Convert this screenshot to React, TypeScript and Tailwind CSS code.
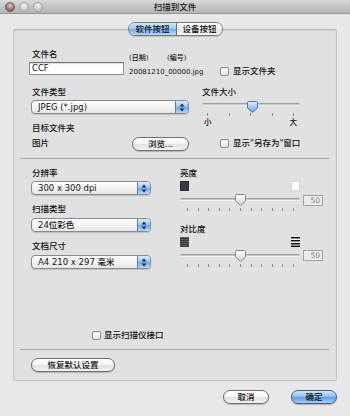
import React from "react";

function Checkbox() {
  return (
    <span className="inline-block w-[9px] h-[9px] shrink-0 border border-[#8d8d8d] rounded-[2px] bg-[linear-gradient(to_bottom,#ffffff,#e4e4e4)] shadow-[inset_0_1px_1px_rgba(0,0,0,0.08)]" />
  );
}

function Stepper() {
  return (
    <div className="w-[13px] h-full border-l border-[#5b80ad] bg-[linear-gradient(to_bottom,#dcecfc,#9cc6f1_48%,#6ea8e9_52%,#b9d9f8)] flex items-center justify-center">
      <svg width="6" height="9" viewBox="0 0 6 9">
        <path d="M3 0.5 L5.5 3.5 H0.5 Z" fill="#1d2f4c" />
        <path d="M3 8.5 L5.5 5.5 H0.5 Z" fill="#1d2f4c" />
      </svg>
    </div>
  );
}

function Popup({ className, label }: { className: string; label: string }) {
  return (
    <div
      className={
        "flex h-[14px] rounded-[4px] border border-[#8a8a8a] overflow-hidden bg-[linear-gradient(to_bottom,#ffffff,#f4f4f4_50%,#e6e6e6)] shadow-[0_1px_1px_rgba(0,0,0,0.15)] " +
        className
      }
    >
      <div className="flex-1 pl-[6px] leading-[12px] text-[8.5px] text-[#111] whitespace-nowrap">{label}</div>
      <Stepper />
    </div>
  );
}

function PushButton({ className, label }: { className: string; label: string }) {
  return (
    <div
      className={
        "h-[14px] rounded-full border border-[#6f6f6f] bg-[linear-gradient(to_bottom,#ffffff,#f6f6f6_45%,#e2e2e2_55%,#f3f3f3)] shadow-[0_1px_1px_rgba(0,0,0,0.2)] flex items-center justify-center text-[8.5px] text-[#111] leading-none " +
        className
      }
    >
      {label}
    </div>
  );
}

function BlueKnob() {
  return (
    <svg width="11" height="12" viewBox="0 0 11 12">
      <defs>
        <linearGradient id="kb" x1="0" y1="0" x2="0" y2="1">
          <stop offset="0" stopColor="#e6f2fe" />
          <stop offset="0.5" stopColor="#a3cbf3" />
          <stop offset="1" stopColor="#5f9fe6" />
        </linearGradient>
      </defs>
      <path
        d="M1.5 0.5 H9.5 A1 1 0 0 1 10.5 1.5 V7 L5.5 11.5 L0.5 7 V1.5 A1 1 0 0 1 1.5 0.5 Z"
        fill="url(#kb)"
        stroke="#4d77a6"
      />
    </svg>
  );
}

function WhiteKnob() {
  return (
    <svg width="11" height="12" viewBox="0 0 11 12">
      <defs>
        <linearGradient id="kw" x1="0" y1="0" x2="0" y2="1">
          <stop offset="0" stopColor="#ffffff" />
          <stop offset="1" stopColor="#d2d2d2" />
        </linearGradient>
      </defs>
      <path
        d="M1.5 0.5 H9.5 A1 1 0 0 1 10.5 1.5 V7 L5.5 11.5 L0.5 7 V1.5 A1 1 0 0 1 1.5 0.5 Z"
        fill="url(#kw)"
        stroke="#838383"
      />
    </svg>
  );
}

function Track() {
  return (
    <div className="h-[3px] rounded-full bg-[linear-gradient(to_bottom,#8a8a8a,#bdbdbd_60%,#d8d8d8)] border-b border-[#f0f0f0]" />
  );
}

function Ticks({ n, className }: { n: number; className: string }) {
  return (
    <div className={"flex justify-between h-[3px] " + className}>
      {Array.from({ length: n }).map((_, i) => (
        <span key={i} className="w-px h-[3px] bg-[#8a8a8a]" />
      ))}
    </div>
  );
}

function ValueBox() {
  return (
    <div className="ml-[3px] mt-px w-[20px] h-[11px] border border-[#a2a2a2] bg-[#ececec] text-right pr-[2px] text-[7.5px] leading-[9px] text-[#7c7c7c]">
      50
    </div>
  );
}

function Label({ children, className = "" }: { children: React.ReactNode; className?: string }) {
  return <div className={"h-[12px] leading-[12px] text-[8.5px] text-[#111] whitespace-nowrap " + className}>{children}</div>;
}

export default function App() {
  return (
    <div className="w-[350px] h-[416px] bg-[#e8e8e8] flex flex-col overflow-hidden font-[family-name:'DejaVu_Sans','Noto_Sans_CJK_SC',sans-serif] font-medium text-[#111]">
      {/* title bar */}
      <div className="h-[14px] grid grid-cols-[1fr_auto_1fr] items-center bg-[linear-gradient(to_bottom,#dadada,#c2c2c2_60%,#b6b6b6)] border-b border-[#959595]">
        <div className="flex items-center gap-[4px] pl-[5px]">
          <span className="w-[10px] h-[10px] rounded-full border border-[#6b5c52] bg-[radial-gradient(circle_at_50%_30%,#d8cbc0,#8e7b6e_60%,#6d5c51)]" />
          <span className="w-[10px] h-[10px] rounded-full border border-[#a3a3a3] bg-[radial-gradient(circle_at_50%_30%,#f2f2f2,#cdcdcd_60%,#bdbdbd)]" />
          <span className="w-[10px] h-[10px] rounded-full border border-[#a3a3a3] bg-[radial-gradient(circle_at_50%_30%,#f2f2f2,#cdcdcd_60%,#bdbdbd)]" />
        </div>
        <div className="text-[8.5px] leading-[12px] text-[#1a1a1a]">扫描到文件</div>
        <div />
      </div>

      {/* group box */}
      <div className="px-[13px] pt-[15px]">
        <div className="relative h-[352px] border border-[#c6c6c6] border-t-[#b5b5b5] rounded-[2px] bg-[#e1e1e1] shadow-[inset_0_1px_2px_rgba(0,0,0,0.06)] flex flex-col">
          {/* tabs */}
          <div className="absolute left-[114px] -top-[8px] flex h-[14px] w-[95px] rounded-full border border-[#777] overflow-hidden shadow-[0_1px_1px_rgba(0,0,0,0.15)] text-[8.5px] leading-[12px]">
            <div className="w-[47px] flex items-center justify-center bg-[linear-gradient(to_bottom,#d6e9fc,#9ec8f2_48%,#74adea_52%,#b8dafa)] text-[#111]">
              软件按钮
            </div>
            <div className="w-px bg-[#6d6d6d]" />
            <div className="flex-1 flex items-center justify-center bg-[linear-gradient(to_bottom,#ffffff,#f4f4f4_48%,#e4e4e4_52%,#f6f6f6)] text-[#111]">
              设备按钮
            </div>
          </div>

          {/* section 1 */}
          <div className="pl-[15px] pt-[18px]">
            <div className="flex">
              <div className="w-[95px]">
                <Label className="pl-[3px]">文件名</Label>
                <div className="mt-[2px] h-[13px] border border-[#8e8e8e] border-t-[#6f6f6f] bg-white shadow-[inset_0_1px_1px_rgba(0,0,0,0.15)] pl-[2px] text-[8.5px] leading-[11px]">
                  CCF
                </div>
              </div>
              <div className="ml-[5px] w-[86px]">
                <div className="mt-[5px] h-[10px] flex text-[7px] leading-[10px]">
                  <span className="w-[38px]">(日期)</span>
                  <span>(编号)</span>
                </div>
                <div className="mt-[4px] h-[10px] text-[7px] leading-[10px] whitespace-nowrap">20081210_00000.jpg</div>
              </div>
              <div className="ml-[5px] pt-[19px]">
                <div className="flex items-center gap-[4px] h-[9px]">
                  <Checkbox />
                  <span className="text-[8.5px] leading-[9px]">显示文件夹</span>
                </div>
              </div>
            </div>

            <div className="flex gap-[13px]">
              <div className="w-[160px]">
                <Label className="mt-[9px] pl-[3px]">文件类型</Label>
                <Popup className="mt-[2px] ml-[2px] w-[158px]" label="JPEG (*.jpg)" />
                <Label className="mt-[8px] pl-[3px]">目标文件夹</Label>
                <div className="mt-[3px] h-[14px] flex items-center">
                  <Label className="pl-[3px] -mt-[2px]">图片</Label>
                  <PushButton className="ml-auto w-[57px]" label="浏览..." />
                </div>
              </div>
              <div className="w-[98px]">
                <Label className="mt-[9px]">文件大小</Label>
                <div className="relative h-[13px] mt-[2px]">
                  <div className="pt-[3px]">
                    <Track />
                  </div>
                  <div className="absolute left-[45px] top-[1px] leading-none">
                    <BlueKnob />
                  </div>
                </div>
                <Ticks n={5} className="pl-[5px] pr-[6px]" />
                <div className="mt-[2px] h-[9px] flex justify-between pl-[2px] pr-[3px] text-[7.5px] leading-[9px]">
                  <span>小</span>
                  <span>大</span>
                </div>
              </div>
            </div>
          </div>
          <div className="-mt-[13px] pl-[206px] h-[10px] flex items-center gap-[4px]">
            <Checkbox />
            <span className="text-[8.5px] leading-[9px] whitespace-nowrap">显示"另存为"窗口</span>
          </div>

          {/* separator */}
          <div className="mt-[10px] ml-[6px] mr-[7px] h-px bg-[#a6a6a6]" />

          {/* section 2 */}
          <div className="flex pl-[17px] gap-[29px]">
            <div className="w-[120px]">
              <Label className="mt-[8px] pl-[1px]">分辨率</Label>
              <Popup className="mt-[2px] w-[120px]" label="300 x 300 dpi" />
              <Label className="mt-[8px] pl-[1px]">扫描类型</Label>
              <Popup className="mt-[3px] w-[120px]" label="24位彩色" />
              <Label className="mt-[8px] pl-[1px]">文档尺寸</Label>
              <Popup className="mt-[3px] w-[120px]" label="A4 210 x 297 毫米" />
            </div>
            <div className="w-[143px]">
              <Label className="mt-[8px]">亮度</Label>
              <div className="mt-[2px] h-[10px] w-[120px] flex justify-between">
                <span className="w-[9px] h-[10px] bg-[#3a3a46] border border-[#2a2a30]" />
                <span className="w-[9px] h-[10px] bg-white border border-[#d6d6d6]" />
              </div>
              <div className="mt-[3px] h-[12px] flex">
                <div className="relative w-[120px]">
                  <div className="pt-[4px]">
                    <Track />
                  </div>
                  <div className="absolute left-[55px] top-[0px] leading-none">
                    <WhiteKnob />
                  </div>
                </div>
                <ValueBox />
              </div>
              <Ticks n={11} className="mt-[2px] w-[120px] pl-[7px] pr-[6px]" />

              <Label className="mt-[12px]">对比度</Label>
              <div className="mt-[2px] h-[10px] w-[120px] flex justify-between">
                <svg width="9" height="10" viewBox="0 0 9 10">
                  <rect x="0" y="0" width="9" height="10" fill="#5a5a5a" />
                  <rect x="0" y="1" width="9" height="1" fill="#3a3a3a" />
                  <rect x="0" y="3" width="9" height="1" fill="#3a3a3a" />
                  <rect x="0" y="5" width="9" height="1" fill="#3a3a3a" />
                  <rect x="0" y="7" width="9" height="1" fill="#3a3a3a" />
                  <rect x="0" y="9" width="9" height="1" fill="#3a3a3a" />
                </svg>
                <svg width="9" height="10" viewBox="0 0 9 10">
                  <rect x="0" y="0" width="9" height="10" fill="#ffffff" />
                  <rect x="0" y="0" width="9" height="1.5" fill="#111" />
                  <rect x="0" y="3" width="9" height="1.5" fill="#111" />
                  <rect x="0" y="6" width="9" height="1.5" fill="#111" />
                  <rect x="0" y="8.5" width="9" height="1.5" fill="#111" />
                </svg>
              </div>
              <div className="mt-[2px] h-[12px] flex">
                <div className="relative w-[120px]">
                  <div className="pt-[5px]">
                    <Track />
                  </div>
                  <div className="absolute left-[55px] top-[1px] leading-none">
                    <WhiteKnob />
                  </div>
                </div>
                <ValueBox />
              </div>
              <Ticks n={11} className="mt-[3px] w-[120px] pl-[7px] pr-[6px]" />
            </div>
          </div>

          {/* bottom of group */}
          <div className="mt-auto">
            <div className="pl-[78px] h-[10px] flex items-center gap-[3px]">
              <Checkbox />
              <span className="text-[8.5px] leading-[9px]">显示扫描仪接口</span>
            </div>
            <div className="mt-[9px] ml-[6px] mr-[7px] h-px bg-[#a6a6a6]" />
            <div className="mt-[8px] pl-[17px] pb-[8px]">
              <PushButton className="w-[84px]" label="恢复默认设置" />
            </div>
          </div>
        </div>
      </div>

      {/* dialog buttons */}
      <div className="mt-[9px] flex justify-end gap-[22px] pr-[13px]">
        <PushButton className="w-[46px]" label="取消" />
        <div className="h-[14px] w-[46px] rounded-full border border-[#3d5f8c] bg-[linear-gradient(to_bottom,#d3e6fa,#93c0f0_45%,#5d9de6_55%,#a9d1f7)] shadow-[0_1px_1px_rgba(0,0,0,0.25)] flex items-center justify-center text-[8.5px] leading-none text-[#111]">
          确定
        </div>
      </div>
    </div>
  );
}
